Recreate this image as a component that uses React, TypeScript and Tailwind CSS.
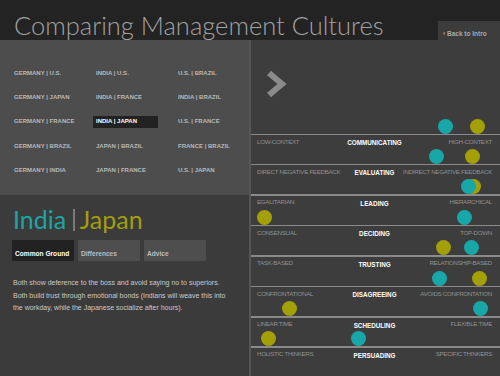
import type { FC } from 'react';

type Dim = {
  left: string;
  title: string;
  right: string;
  dots: { x: number; c: 'teal' | 'olive' }[];
};

// dot x = centre position inside the right column
const dims: Dim[] = [
  { left: 'Low-context', title: 'Communicating', right: 'High-context', dots: [{ x: 194, c: 'teal' }, { x: 226, c: 'olive' }] },
  { left: 'Direct negative feedback', title: 'Evaluating', right: 'Indirect negative feedback', dots: [{ x: 185, c: 'teal' }, { x: 221, c: 'olive' }] },
  { left: 'Egalitarian', title: 'Leading', right: 'Hierarchical', dots: [{ x: 222, c: 'olive' }, { x: 217, c: 'teal' }] },
  { left: 'Consensual', title: 'Deciding', right: 'Top-down', dots: [{ x: 13, c: 'olive' }, { x: 213, c: 'teal' }] },
  { left: 'Task-based', title: 'Trusting', right: 'Relationship-based', dots: [{ x: 192, c: 'olive' }, { x: 220, c: 'teal' }] },
  { left: 'Confrontational', title: 'Disagreeing', right: 'Avoids confrontation', dots: [{ x: 188, c: 'teal' }, { x: 228, c: 'olive' }] },
  { left: 'Linear time', title: 'Scheduling', right: 'Flexible time', dots: [{ x: 38, c: 'olive' }, { x: 229, c: 'teal' }] },
  { left: 'Holistic thinkers', title: 'Persuading', right: 'Specific thinkers', dots: [{ x: 17, c: 'olive' }, { x: 107, c: 'teal' }] },
];

const pairs = [
  ['Germany | U.S.', 'India | U.S.', 'U.S. | Brazil'],
  ['Germany | Japan', 'India | France', 'India | Brazil'],
  ['Germany | France', 'India | Japan', 'U.S. | France'],
  ['Germany | Brazil', 'Japan | Brazil', 'France | Brazil'],
  ['Germany | India', 'Japan | France', 'U.S. | Japan'],
];

const tabs = ['Common Ground', 'Differences', 'Advice'];

const App: FC = () => {
  return (
    <div className="w-[500px] h-[376px] overflow-hidden bg-[#3c3c3c] font-['Liberation_Sans',Arial,sans-serif]">
      {/* Header */}
      <header className="h-[40px] bg-[#232323] flex justify-between">
        <h1 className="mt-[12.5px] ml-[14px] text-[25.5px] leading-none font-light text-[#a2a2a2] font-['Lato',sans-serif] whitespace-nowrap">
          Comparing Management Cultures
        </h1>
        <button className="self-end h-[19px] w-[62px] bg-[#3c3c3c] text-[6.5px] font-bold text-[#a8a8a8] text-left pl-[5px] pt-[6px]">
          ‹ Back to Intro
        </button>
      </header>

      <div className="flex h-[336px]">
        {/* Left column */}
        <div className="w-[249px] flex flex-col">
          <div className="h-[155px] bg-[#4d4d4d] pt-[27px] pl-[14px]">
            <div className="grid grid-cols-[82px_82px_82px] gap-y-[11.8px]">
              {pairs.flat().map((p) => {
                const active = p === 'India | Japan';
                return (
                  <div
                    key={p}
                    className={`h-[12.5px] flex items-center -ml-[3px] pl-[3px] w-[65px] text-[6px] font-bold uppercase whitespace-nowrap ${
                      active ? 'bg-[#222222] text-white' : 'text-[#b9b9b9]'
                    }`}
                  >
                    {p}
                  </div>
                );
              })}
            </div>
          </div>

          <div className="flex-1 bg-[#3b3b3b] pt-[12px] px-[13px]">
            <div className="flex items-center text-[25px] leading-none font-['Lato',sans-serif]">
              <span className="text-[#1ba6a6]">India</span>
              <span className="mx-[7px] w-[1.5px] h-[22px] bg-[#7a7a7a]" />
              <span className="-ml-[2px] text-[#a29e0b]">Japan</span>
            </div>

            <div className="flex gap-[4px] mt-[8px] -ml-[1px]">
              {tabs.map((t, i) => (
                <div
                  key={t}
                  className={`w-[62px] h-[21px] flex items-end pl-[3px] pb-[2px] text-[6.6px] font-bold ${
                    i === 0 ? 'bg-[#222222] text-white' : 'bg-[#4e4e4e] text-[#bdbdbd]'
                  }`}
                >
                  {t}
                </div>
              ))}
            </div>

            <p className="mt-[16px] text-[7px] leading-[12.5px] text-[#cacaca] whitespace-nowrap">
              Both show deference to the boss and avoid saying no to superiors.
              <br />
              Both build trust through emotional bonds (Indians will weave this into
              <br />
              the workday, while the Japanese socialize after hours).
            </p>
          </div>
        </div>

        <div className="w-[2px] bg-[#565656]" />

        {/* Right column */}
        <div className="w-[249px] bg-[#3d3d3d] overflow-hidden flex flex-col">
          <div className="h-[78.5px] shrink-0 pl-[15px] pt-[30px]">
            <svg width="22" height="28" viewBox="0 0 22 28">
              <polyline points="3,3 16,14 3,25" fill="none" stroke="#8a8a8a" strokeWidth="6" />
            </svg>
          </div>

          {dims.map((d) => (
            <div key={d.title} className="shrink-0">
              <div className="relative h-[15px]">
                {d.dots.map((dot, i) => (
                  <span
                    key={i}
                    className={`absolute bottom-0 w-[15px] h-[15px] rounded-full ${
                      dot.c === 'teal' ? 'bg-[#17a7a8]' : 'bg-[#a39f06]'
                    }`}
                    style={{ left: dot.x - 7.5, zIndex: dot.c === 'teal' ? 2 : 1 }}
                  />
                ))}
              </div>
              <div className="h-[1.5px] bg-[#8a8a8a]" />
              <div className="h-[13.93px] grid grid-cols-[1fr_auto_1fr] pl-[6px] pr-[8px] uppercase whitespace-nowrap">
                <span className="pt-[1.5px] text-[6.2px] tracking-[-0.3px] text-[#909090]">{d.left}</span>
                <span className="pt-[3px] text-[6.3px] font-bold text-white">{d.title}</span>
                <span className="pt-[1.5px] text-[6.2px] tracking-[-0.3px] text-[#909090] text-right">{d.right}</span>
              </div>
            </div>
          ))}
        </div>
      </div>
    </div>
  );
};

export default App;
